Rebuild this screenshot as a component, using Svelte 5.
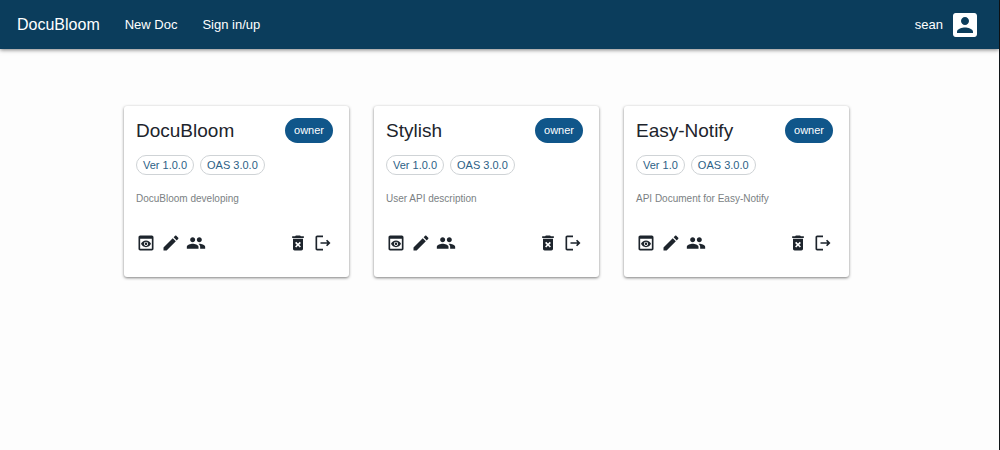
<script>
  const docs = [
    { title: 'DocuBloom', version: '1.0.0', oas: '3.0.0', description: 'DocuBloom developing' },
    { title: 'Stylish', version: '1.0.0', oas: '3.0.0', description: 'User API description' },
    { title: 'Easy-Notify', version: '1.0', oas: '3.0.0', description: 'API Document for Easy-Notify' }
  ];

  const preview = 'M19 3H5c-1.11 0-2 .9-2 2v14c0 1.1.89 2 2 2h14c1.1 0 2-.9 2-2V5c0-1.1-.89-2-2-2zm0 16H5V7h14v12zm-5.5-6c0 .83-.67 1.5-1.5 1.5s-1.5-.67-1.5-1.5.67-1.5 1.5-1.5 1.5.67 1.5 1.5zM12 9c-2.73 0-5.06 1.66-6 4 .94 2.34 3.27 4 6 4s5.06-1.66 6-4c-.94-2.34-3.27-4-6-4zm0 6.5c-1.38 0-2.5-1.12-2.5-2.5s1.12-2.5 2.5-2.5 2.5 1.12 2.5 2.5-1.12 2.5-2.5 2.5z';
  const edit = 'M3 17.25V21h3.75L17.81 9.94l-3.75-3.75L3 17.25zM20.71 7.04c.39-.39.39-1.02 0-1.41l-2.34-2.34c-.39-.39-1.02-.39-1.41 0l-1.83 1.83 3.75 3.75 1.83-1.83z';
  const people = 'M16 11c1.66 0 2.99-1.34 2.99-3S17.66 5 16 5s-3 1.34-3 3 1.34 3 3 3zm-8 0c1.66 0 2.99-1.34 2.99-3S9.66 5 8 5 5 6.34 5 8s1.34 3 3 3zm0 2c-2.33 0-7 1.17-7 3.5V19h14v-2.5c0-2.33-4.67-3.5-7-3.5zm8 0c-.29 0-.62.02-.97.05 1.16.84 1.97 1.97 1.97 3.45V19h6v-2.5c0-2.33-4.67-3.5-7-3.5z';
  const trash = 'M6 19c0 1.1.9 2 2 2h8c1.1 0 2-.9 2-2V7H6v12zm2.46-7.12l1.41-1.41L12 12.59l2.12-2.12 1.41 1.41L13.41 14l2.12 2.12-1.41 1.41L12 15.41l-2.12 2.12-1.41-1.41L10.59 14l-2.13-2.12zM15.5 4l-1-1h-5l-1 1H5v2h14V4z';
  const leave = 'M17 8l-1.41 1.41L17.17 11H9v2h8.17l-1.58 1.58L17 16l4-4-4-4zM5 5h7V3H5c-1.1 0-2 .9-2 2v14c0 1.1.9 2 2 2h7v-2H5V5z';
  const account = 'M3 5v14c0 1.1.89 2 2 2h14c1.1 0 2-.9 2-2V5c0-1.1-.9-2-2-2H5c-1.11 0-2 .9-2 2zm12 4c0 1.66-1.34 3-3 3s-3-1.34-3-3 1.34-3 3-3 3 1.34 3 3zm-9 8c0-2 4-3.1 6-3.1s6 1.1 6 3.1v1H6v-1z';
</script>

{#snippet icon(path)}
  <svg viewBox="0 0 24 24" aria-hidden="true"><path d={path} /></svg>
{/snippet}

{#snippet action(label, path)}
  <button type="button" class="action" aria-label={label}>{@render icon(path)}</button>
{/snippet}

<div class="page">
  <header>
    <nav>
      <a class="brand" href="#home">DocuBloom</a>
      <a href="#new">New Doc</a>
      <a href="#sign">Sign in/up</a>
    </nav>
    <div class="user">
      <span>sean</span>
      <button type="button" class="account" aria-label="Account">{@render icon(account)}</button>
    </div>
  </header>

  <main>
    {#each docs as doc}
      <article>
        <div class="heading">
          <h2>{doc.title}</h2>
          <span class="role">owner</span>
        </div>
        <div class="tags">
          <span class="tag">Ver {doc.version}</span>
          <span class="tag">OAS {doc.oas}</span>
        </div>
        <p>{doc.description}</p>
        <div class="actions">
          {@render action('Preview', preview)}
          {@render action('Edit', edit)}
          {@render action('Collaborators', people)}
          <span class="spacer"></span>
          {@render action('Delete', trash)}
          {@render action('Leave', leave)}
        </div>
      </article>
    {/each}
  </main>
</div>

<style>
  :global(body) {
    margin: 0;
    background: #fdfdfd;
  }

  .page {
    box-sizing: border-box;
    min-height: 100vh;
    border-right: 1px solid #111518;
    font-family: "Liberation Sans", Arial, sans-serif;
    color: #1d242c;
  }

  header {
    display: flex;
    align-items: center;
    justify-content: space-between;
    box-sizing: border-box;
    min-height: 49px;
    padding: 0 18px 0 17px;
    background: #0b3d5c;
    box-shadow: 0 1px 4px rgba(0, 0, 0, 0.5);
    color: #fff;
    font-size: 13px;
  }

  nav {
    display: flex;
    align-items: center;
    gap: 25px;
  }

  a {
    color: inherit;
    text-decoration: none;
  }

  .brand {
    font-size: 16px;
  }

  .user {
    display: flex;
    align-items: center;
    gap: 6px;
  }

  button {
    display: flex;
    padding: 0;
    border: 0;
    background: none;
    color: inherit;
    cursor: pointer;
  }

  svg {
    width: 100%;
    height: 100%;
    fill: currentColor;
  }

  .account {
    width: 32px;
    height: 32px;
  }

  main {
    display: grid;
    grid-template-columns: repeat(auto-fill, 225px);
    gap: 25px;
    padding: 57px 124px;
  }

  article {
    padding: 12px 16px 24px 12px;
    border-radius: 3px;
    background: #fff;
    box-shadow: 0 1px 3px rgba(0, 0, 0, 0.5);
  }

  .heading {
    display: flex;
    align-items: center;
    justify-content: space-between;
  }

  h2 {
    margin: 0;
    font-size: 19px;
    font-weight: 400;
    line-height: 25px;
  }

  .role {
    padding: 0 9px;
    border-radius: 13px;
    background: #10568a;
    color: #fff;
    font-size: 11px;
    line-height: 25px;
  }

  .tags {
    display: flex;
    gap: 6px;
    margin-top: 12px;
  }

  .tag {
    padding: 0 6px;
    border: 1px solid #cfd3d6;
    border-radius: 10px;
    color: #2d5f86;
    font-size: 11px;
    line-height: 18px;
  }

  p {
    margin: 17px 0 0;
    color: #7b7f83;
    font-size: 10px;
    line-height: 14px;
  }

  .actions {
    display: flex;
    gap: 5px;
    margin-top: 27px;
  }

  .action {
    width: 20px;
    height: 20px;
  }

  .spacer {
    flex: 1;
  }
</style>
